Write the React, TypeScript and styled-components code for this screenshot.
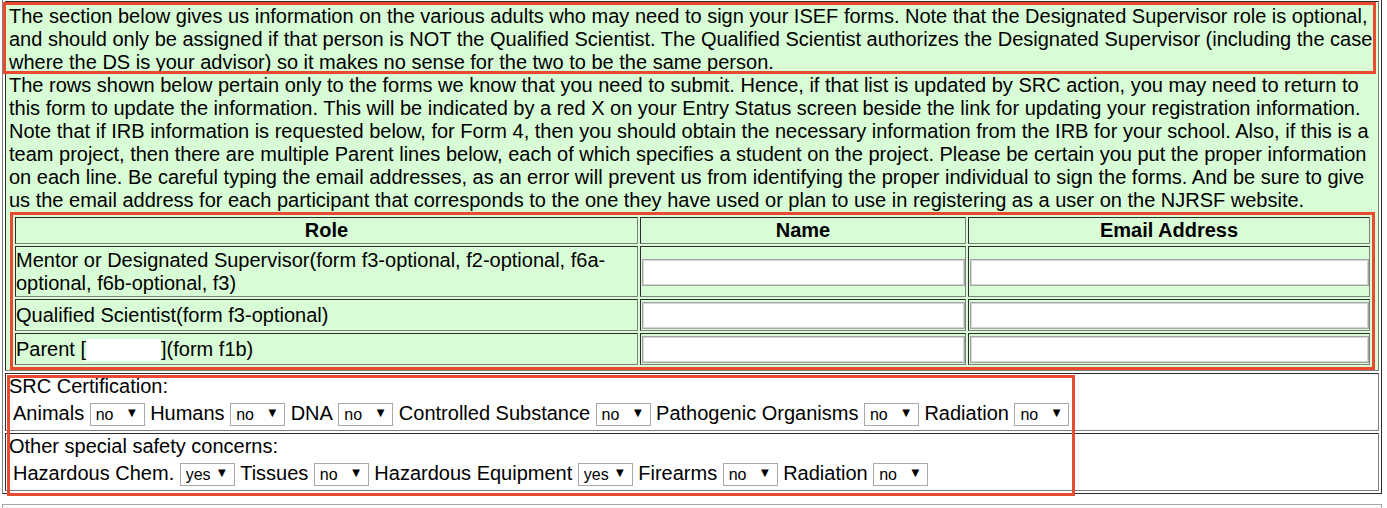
import React from 'react';
import styled, { createGlobalStyle } from 'styled-components';

const GlobalStyle = createGlobalStyle`
  body {
    margin: 0;
    background: #ffffff;
    font-family: "Liberation Sans", Arial, sans-serif;
    font-size: 20px;
    color: #000;
    overflow: hidden;
  }
`;

const RED = '#ea4a2f';

const Frame = styled.div`
  margin: -2px 0 0 2px;
  width: 1380px;
  box-sizing: border-box;
  border: 1px outset gray;
  padding: 2px;
  display: flex;
  flex-direction: column;
  gap: 2px;
`;

const InfoCell = styled.div`
  border: 1px inset gray;
  background: #d8fcd6;
  padding: 3px 3px 1px;
`;

const Lead = styled.p`
  margin: 0 2px 0 -3px;
  padding-left: 3px;
  height: 66px;
  line-height: 23px;
  outline: 3px solid ${RED};
`;

const Notes = styled.p`
  margin: 3px 0 0;
  line-height: 23px;
`;

const Roles = styled.table`
  margin: 3px 3px 2px 4px;
  width: 1359px;
  table-layout: fixed;
  border-collapse: separate;
  border-spacing: 2px;
  outline: 3px solid ${RED};
`;

const Head = styled.th`
  border: 1px inset gray;
  padding: 1px;
  font-weight: bold;
  text-align: center;
  line-height: 23px;
`;

const Cell = styled.td`
  border: 1px inset gray;
  padding: 2px 1px 1px 0;
  line-height: 23px;
  vertical-align: middle;
`;

const TextBox = styled.input`
  display: block;
  width: 100%;
  height: 27px;
  box-sizing: border-box;
  border: 1px solid #a4a4a4;
  box-shadow: inset 0 0 0 1px #d4d4d4;
  background: #fff;
  margin: 0 0 0 1px;
  font: 16px "Liberation Sans", Arial, sans-serif;
`;

const Redacted = styled.span`
  display: inline-block;
  width: 75px;
  height: 22px;
  background: #fff;
  vertical-align: -5px;
`;

const SafetyGroup = styled.div`
  position: relative;
  display: flex;
  flex-direction: column;
  gap: 2px;

  &::after {
    content: '';
    position: absolute;
    left: 2px;
    top: 2px;
    width: 1068px;
    height: 121px;
    box-sizing: border-box;
    border: 3px solid ${RED};
    pointer-events: none;
  }
`;

const SafetyCell = styled.div`
  border: 1px inset gray;
  padding: 1px 3px;
  background: #fff;
`;

const SafetyTitle = styled.div`
  line-height: 23px;
`;

const SelectRow = styled.div`
  display: flex;
  align-items: center;
  gap: 5.5px;
  padding: 4px 0 4px 4px;
  line-height: 23px;
`;

const DropWrap = styled.span`
  position: relative;
  display: inline-block;
  width: 55px;
  height: 23px;
`;

const Drop = styled.select`
  appearance: none;
  width: 100%;
  height: 100%;
  box-sizing: border-box;
  border: 1px solid #a9a9a9;
  border-radius: 0;
  background: #fff;
  padding: 0 0 0 5px;
  margin: 0;
  font: 16px "Liberation Sans", Arial, sans-serif;
  color: #000;
`;

const Arrow = styled.span`
  position: absolute;
  right: 9px;
  top: 5px;
  font-size: 10px;
  line-height: 12px;
  pointer-events: none;
  font-family: "DejaVu Sans", sans-serif;
`;

const NextTable = styled.div`
  margin: 10px 0 0 2px;
  width: 1380px;
  height: 12px;
  box-sizing: border-box;
  border: 1px solid #a8a8a8;
  border-bottom: none;
  background: #fafafa;
`;

type Choice = { label: string; value: 'yes' | 'no' };

const src: Choice[] = [
  { label: 'Animals', value: 'no' },
  { label: 'Humans', value: 'no' },
  { label: 'DNA', value: 'no' },
  { label: 'Controlled Substance', value: 'no' },
  { label: 'Pathogenic Organisms', value: 'no' },
  { label: 'Radiation', value: 'no' },
];

const other: Choice[] = [
  { label: 'Hazardous Chem.', value: 'yes' },
  { label: 'Tissues', value: 'no' },
  { label: 'Hazardous Equipment', value: 'yes' },
  { label: 'Firearms', value: 'no' },
  { label: 'Radiation', value: 'no' },
];

const YesNo = ({ value }: { value: string }) => (
  <DropWrap>
    <Drop defaultValue={value}>
      <option value="no">no</option>
      <option value="yes">yes</option>
    </Drop>
    <Arrow>▼</Arrow>
  </DropWrap>
);

const Choices = ({ items }: { items: Choice[] }) => (
  <SelectRow>
    {items.map((c, i) => (
      <React.Fragment key={i}>
        <span>{c.label}</span>
        <YesNo value={c.value} />
      </React.Fragment>
    ))}
  </SelectRow>
);

const App = () => {
  return (
    <>
      <GlobalStyle />
      <Frame>
        <InfoCell>
          <Lead>
            The section below gives us information on the various adults who may need to sign your ISEF
            forms. Note that the Designated Supervisor role is optional, and should only be assigned if that
            person is NOT the Qualified Scientist. The Qualified Scientist authorizes the Designated Supervisor
            (including the case where the DS is your advisor) so it makes no sense for the two to be the same
            person.
          </Lead>
          <Notes>
            The rows shown below pertain only to the forms we know that you need to submit. Hence, if that list
            is updated by SRC action, you may need to return to this form to update the information. This will
            be indicated by a red X on your Entry Status screen beside the link for updating your registration
            information. Note that if IRB information is requested below, for Form 4, then you should obtain
            the necessary information from the IRB for your school. Also, if this is a team project, then there
            are multiple Parent lines below, each of which specifies a student on the project. Please be certain
            you put the proper information on each line. Be careful typing the email addresses, as an error will
            prevent us from identifying the proper individual to sign the forms. And be sure to give us the
            email address for each participant that corresponds to the one they have used or plan to use in
            registering as a user on the NJRSF website.
          </Notes>
          <Roles>
            <colgroup>
              <col style={{ width: 623 }} />
              <col style={{ width: 326 }} />
              <col />
            </colgroup>
            <thead>
              <tr>
                <Head>Role</Head>
                <Head>Name</Head>
                <Head>Email Address</Head>
              </tr>
            </thead>
            <tbody>
              <tr>
                <Cell>
                  Mentor or Designated Supervisor(form f3-optional, f2-optional, f6a-optional, f6b-optional, f3)
                </Cell>
                <Cell>
                  <TextBox type="text" />
                </Cell>
                <Cell>
                  <TextBox type="text" />
                </Cell>
              </tr>
              <tr>
                <Cell>Qualified Scientist(form f3-optional)</Cell>
                <Cell>
                  <TextBox type="text" />
                </Cell>
                <Cell>
                  <TextBox type="text" />
                </Cell>
              </tr>
              <tr>
                <Cell>
                  Parent [<Redacted />](form f1b)
                </Cell>
                <Cell>
                  <TextBox type="text" />
                </Cell>
                <Cell>
                  <TextBox type="text" />
                </Cell>
              </tr>
            </tbody>
          </Roles>
        </InfoCell>
        <SafetyGroup>
          <SafetyCell>
            <SafetyTitle>SRC Certification:</SafetyTitle>
            <Choices items={src} />
          </SafetyCell>
          <SafetyCell>
            <SafetyTitle>Other special safety concerns:</SafetyTitle>
            <Choices items={other} />
          </SafetyCell>
        </SafetyGroup>
      </Frame>
      <NextTable />
    </>
  );
};

export default App;
